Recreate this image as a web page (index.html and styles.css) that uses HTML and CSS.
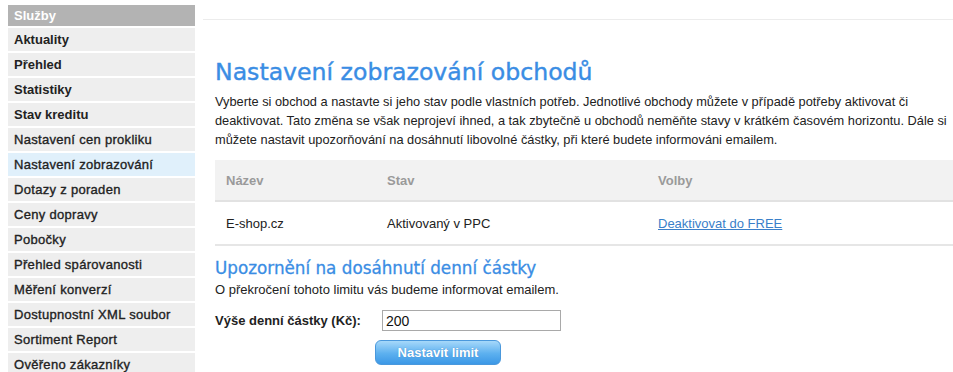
FILE: index.html
```html
<!DOCTYPE html>
<html lang="cs">
<head>
    <meta charset="UTF-8">
    <meta name="viewport" content="width=device-width, initial-scale=1.0">
    <title>Nastavení zobrazování obchodů</title>
    <link rel="stylesheet" href="styles.css">
</head>
<body>
    <div class="page">
        <div class="sidebar">
            <div class="side-head">Služby</div>
            <a class="side-item strong" href="#">Aktuality</a>
            <a class="side-item strong" href="#">Přehled</a>
            <a class="side-item strong" href="#">Statistiky</a>
            <a class="side-item strong" href="#">Stav kreditu</a>
            <a class="side-item" href="#">Nastavení cen prokliku</a>
            <a class="side-item active" href="#">Nastavení zobrazování</a>
            <a class="side-item" href="#">Dotazy z poraden</a>
            <a class="side-item" href="#">Ceny dopravy</a>
            <a class="side-item" href="#">Pobočky</a>
            <a class="side-item" href="#">Přehled spárovanosti</a>
            <a class="side-item" href="#">Měření konverzí</a>
            <a class="side-item" href="#">Dostupnostní XML soubor</a>
            <a class="side-item" href="#">Sortiment Report</a>
            <a class="side-item" href="#">Ověřeno zákazníky</a>
        </div>
        <div class="main">
            <div class="topbar"></div>
            <div class="content">
                <h1>Nastavení zobrazování obchodů</h1>
                <p class="intro">Vyberte si obchod a nastavte si jeho stav podle vlastních potřeb. Jednotlivé obchody můžete v případě potřeby aktivovat či deaktivovat. Tato změna se však neprojeví ihned, a tak zbytečně u obchodů neměňte stavy v krátkém časovém horizontu. Dále si můžete nastavit upozorňování na dosáhnutí libovolné částky, při které budete informováni emailem.</p>
                <table class="shops">
                    <thead>
                        <tr>
                            <th class="col-name">Název</th>
                            <th class="col-state">Stav</th>
                            <th>Volby</th>
                        </tr>
                    </thead>
                    <tbody>
                        <tr>
                            <td>E-shop.cz</td>
                            <td>Aktivovaný v PPC</td>
                            <td><a href="#">Deaktivovat do FREE</a></td>
                        </tr>
                    </tbody>
                </table>
                <h2>Upozornění na dosáhnutí denní částky</h2>
                <p class="note">O překročení tohoto limitu vás budeme informovat emailem.</p>
                <form class="limit-form">
                    <div class="form-row">
                        <label for="limit">Výše denní částky (Kč):</label>
                        <input type="text" id="limit" value="200">
                    </div>
                    <button type="submit">Nastavit limit</button>
                </form>
            </div>
        </div>
    </div>
</body>
</html>
```

FILE: styles.css
```css
body {
    margin: 0;
    font-family: "Liberation Sans", Arial, sans-serif;
    font-size: 13px;
    color: #222;
    background: #fff;
}

.page {
    display: flex;
    padding-left: 8px;
}

.sidebar {
    width: 187px;
    margin-top: 5px;
    display: flex;
    flex-direction: column;
    gap: 2px;
}

.side-head {
    height: 21px;
    line-height: 21px;
    padding-left: 6px;
    background-color: #b3b3b3;
    color: #fff;
    font-weight: bold;
}

.side-item {
    display: block;
    height: 23px;
    line-height: 23px;
    padding-left: 6px;
    background-color: #eeeeee;
    color: #222;
    text-decoration: none;
    letter-spacing: 0.3px;
    -webkit-text-stroke: 0.35px #222;
}

.side-item.strong {
    font-weight: bold;
    letter-spacing: 0;
    -webkit-text-stroke: 0;
}

.side-item.active {
    background-color: #e0f0fb;
}

.main {
    flex: 1;
    margin-left: 8px;
}

.topbar {
    height: 19px;
    border-bottom: 1px solid #ececec;
}

.content {
    padding-left: 12px;
}

h1 {
    margin: 37px 0 0;
    font-family: "DejaVu Sans", Verdana, sans-serif;
    font-size: 23.6px;
    font-weight: normal;
    line-height: 30px;
    color: #3a8de4;
    -webkit-text-stroke: 0.4px #3a8de4;
}

.intro {
    margin: 5px 0 0;
    font-size: 12.8px;
    line-height: 19px;
}

.shops {
    width: 100%;
    margin-top: 11px;
    border-collapse: collapse;
}

.shops th {
    height: 40px;
    padding: 0 11px;
    text-align: left;
    font-weight: bold;
    color: #9a9a9a;
    background-color: #f2f2f2;
    border-bottom: 2px solid #e2e2e2;
}

.shops td {
    height: 42px;
    padding: 0 11px;
    border-bottom: 2px solid #e6e6e6;
}

.col-name {
    width: 139px;
}

.col-state {
    width: 249px;
}

.shops a {
    color: #3a7fc9;
}

h2 {
    margin: 11px 0 0;
    font-family: "DejaVu Sans", Verdana, sans-serif;
    font-size: 16.8px;
    font-weight: normal;
    line-height: 22px;
    color: #3a8de4;
    -webkit-text-stroke: 0.3px #3a8de4;
}

.note {
    margin: 1px 0 0;
    line-height: 19px;
}

.limit-form {
    margin-top: 11px;
}

.form-row {
    display: flex;
    align-items: center;
}

.form-row label {
    width: 167px;
    font-weight: bold;
}

.form-row input {
    width: 171px;
    height: 17px;
    padding: 1px 3px;
    border: 1px solid #a9a9a9;
    font-family: "Liberation Sans", Arial, sans-serif;
    font-size: 14px;
    color: #111;
}

button {
    margin: 9px 0 0 160px;
    width: 126px;
    height: 25px;
    border: 1px solid #4a98dc;
    border-radius: 6px;
    background: linear-gradient(#a6d8fa, #5cb0ef 55%, #3c98e6);
    color: #fff;
    font-family: "Liberation Sans", Arial, sans-serif;
    font-size: 13px;
    font-weight: bold;
    text-shadow: 0 0 1px #3a7fc0;
    cursor: pointer;
}
```
